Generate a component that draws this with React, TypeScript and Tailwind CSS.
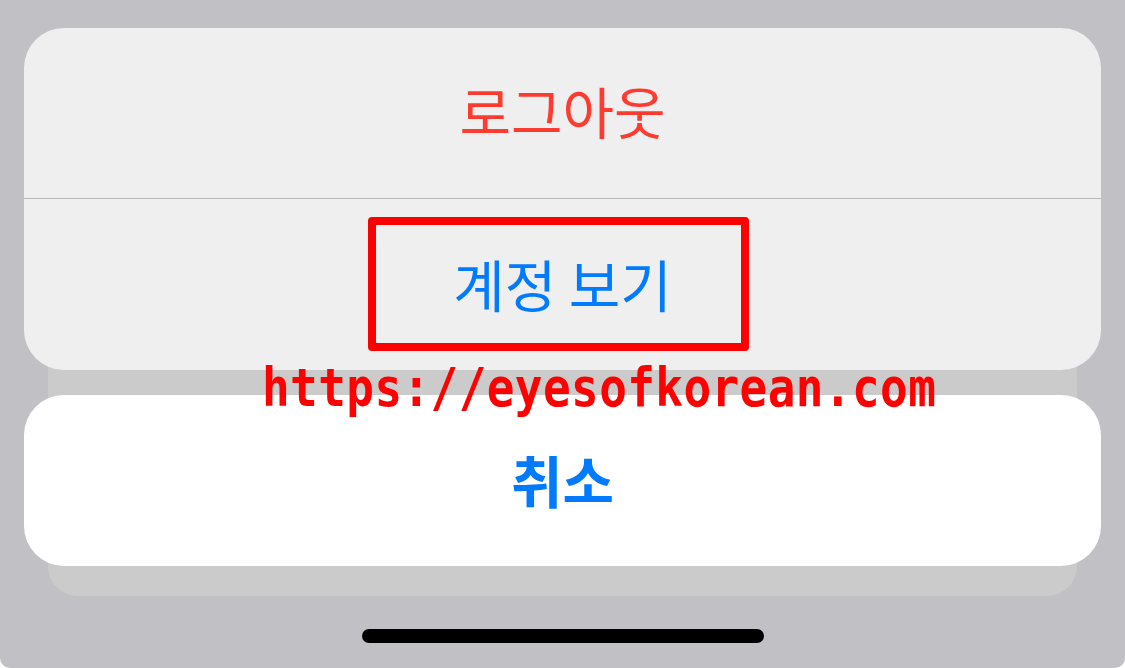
import React from "react";

const font = { fontFamily: '"Noto Sans CJK KR", "Noto Sans", sans-serif' };

export default function App() {
  return (
    <div className="bg-white">
      <div
        className="relative flex h-[668px] w-[1125px] flex-col overflow-hidden rounded-b-[10px] bg-[#c1c0c5]"
        style={font}
      >
        <div className="relative mx-[24px] mt-[28px] flex flex-col gap-[25px]">
          {/* stacked sheet behind */}
          <div className="absolute left-[24px] right-[24px] top-[260px] h-[308px] rounded-b-[30px] bg-[#cbcbcb]" />

          <div className="relative flex flex-col overflow-hidden rounded-[40px] bg-[#efefef]">
            <button className="flex h-[171px] items-center justify-center border-b border-[#b8b8b8] pb-[6px] text-[56px] text-[#ff3b30]">
              로그아웃
            </button>
            <button className="flex h-[171px] items-center justify-center pb-[4px] text-[56px] text-[#007aff]">
              계정 보기
            </button>
          </div>

          <button className="relative flex h-[171px] items-center justify-center pb-[4px] rounded-[40px] bg-white text-[56px] font-semibold text-[#007aff]">
            취소
          </button>

          {/* annotation overlay */}
          <div className="absolute left-[344px] top-[189px] h-[134px] w-[381px] rounded-[4px] border-[8px] border-[#ff0000]" />
          <div
            className="absolute left-[238px] top-[337px] origin-left scale-y-[1.15] text-[46px] font-bold leading-none tracking-[0.4px] text-[#ff0000]"
            style={{ fontFamily: '"DejaVu Sans Mono", monospace' }}
          >
            https://eyesofkorean.com
          </div>
        </div>

        <div className="mt-[63px] flex justify-center">
          <div className="h-[14px] w-[402px] rounded-full bg-black" />
        </div>
      </div>
    </div>
  );
}
